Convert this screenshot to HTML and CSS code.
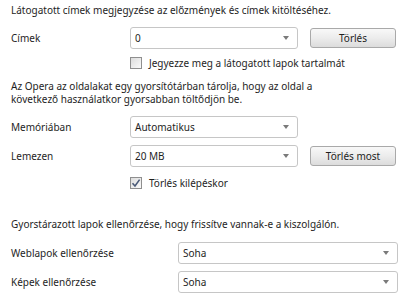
FILE: index.html
```html
<!DOCTYPE html>
<html lang="hu">
<head>
  <meta charset="UTF-8">
  <title>Előzmények és gyorsítótár</title>
  <link rel="stylesheet" href="styles.css">
</head>
<body>
  <div class="panel">
    <p class="note first">Látogatott címek megjegyzése az előzmények és címek kitöltéséhez.</p>

    <div class="row">
      <span class="label">Címek</span>
      <div class="select">0<span class="arrow"></span></div>
      <button class="btn">Törlés</button>
    </div>
    <label class="check">
      <span class="box"></span>Jegyezze meg a látogatott lapok tartalmát
    </label>

    <p class="note para">Az Opera az oldalakat egy gyorsítótárban tárolja, hogy az oldal a<br>következő használatkor gyorsabban töltődjön be.</p>

    <div class="row">
      <span class="label">Memóriában</span>
      <div class="select">Automatikus<span class="arrow"></span></div>
    </div>
    <div class="row gap">
      <span class="label">Lemezen</span>
      <div class="select">20 MB<span class="arrow"></span></div>
      <button class="btn">Törlés most</button>
    </div>
    <label class="check checked">
      <span class="box">
        <svg width="10" height="10" viewBox="0 0 10 10"><path d="M1.5 5.2 L4 8 L8.6 1.6" fill="none" stroke="#4a5a78" stroke-width="1.6"/></svg>
      </span>Törlés kilépéskor
    </label>

    <p class="note late">Gyorstárazott lapok ellenőrzése, hogy frissítve vannak-e a kiszolgálón.</p>

    <div class="row wide">
      <span class="label">Weblapok ellenőrzése</span>
      <div class="select">Soha<span class="arrow"></span></div>
    </div>
    <div class="row wide gap">
      <span class="label">Képek ellenőrzése</span>
      <div class="select">Soha<span class="arrow"></span></div>
    </div>
  </div>
</body>
</html>
```

FILE: styles.css
```css
* {
  box-sizing: border-box;
}
body {
  margin: 0;
  background: #fff;
  color: #1e1e1e;
  font-family: "Noto Sans", "Open Sans", sans-serif;
  font-size: 10px;
  overflow: hidden;
}
.panel {
  padding: 3px 0 0 11px;
}
.note {
  margin: 0;
  line-height: 15px;
}
.para {
  margin-top: 10px;
  line-height: 13px;
}
.late {
  margin-top: 27px;
}
.row {
  display: flex;
  align-items: center;
  height: 22px;
  margin-top: 9px;
}
.row.gap {
  margin-top: 7px;
}
.para + .row {
  margin-top: 10px;
}
.late + .row {
  margin-top: 10px;
}
.label {
  width: 119px;
  flex: none;
}
.wide .label {
  width: 167px;
}
.select {
  position: relative;
  width: 168px;
  height: 22px;
  line-height: 20px;
  padding-left: 4px;
  border: 1px solid #c6c6c6;
  border-radius: 3px;
  background: #fff;
}
.wide .select {
  width: 220px;
}
.arrow {
  position: absolute;
  right: 8px;
  top: 8px;
  border-left: 3.5px solid transparent;
  border-right: 3.5px solid transparent;
  border-top: 4px solid #7a7a7a;
}
.btn {
  margin-left: 12px;
  width: 86px;
  height: 20px;
  padding: 0;
  font: inherit;
  color: #1e1e1e;
  border: 1px solid #a9a9a9;
  border-radius: 3px;
  background: linear-gradient(#f8f8f8, #ececec 50%, #dcdcdc);
}
.check {
  display: flex;
  align-items: center;
  height: 15px;
  margin: 6px 0 0 119px;
}
.checked {
  margin-top: 8px;
}
.box {
  display: flex;
  align-items: center;
  justify-content: center;
  width: 12px;
  height: 12px;
  margin-right: 7px;
  border: 1px solid #8f8f8f;
  background: linear-gradient(135deg, #dcdcdc, #fafafa);
}
```
